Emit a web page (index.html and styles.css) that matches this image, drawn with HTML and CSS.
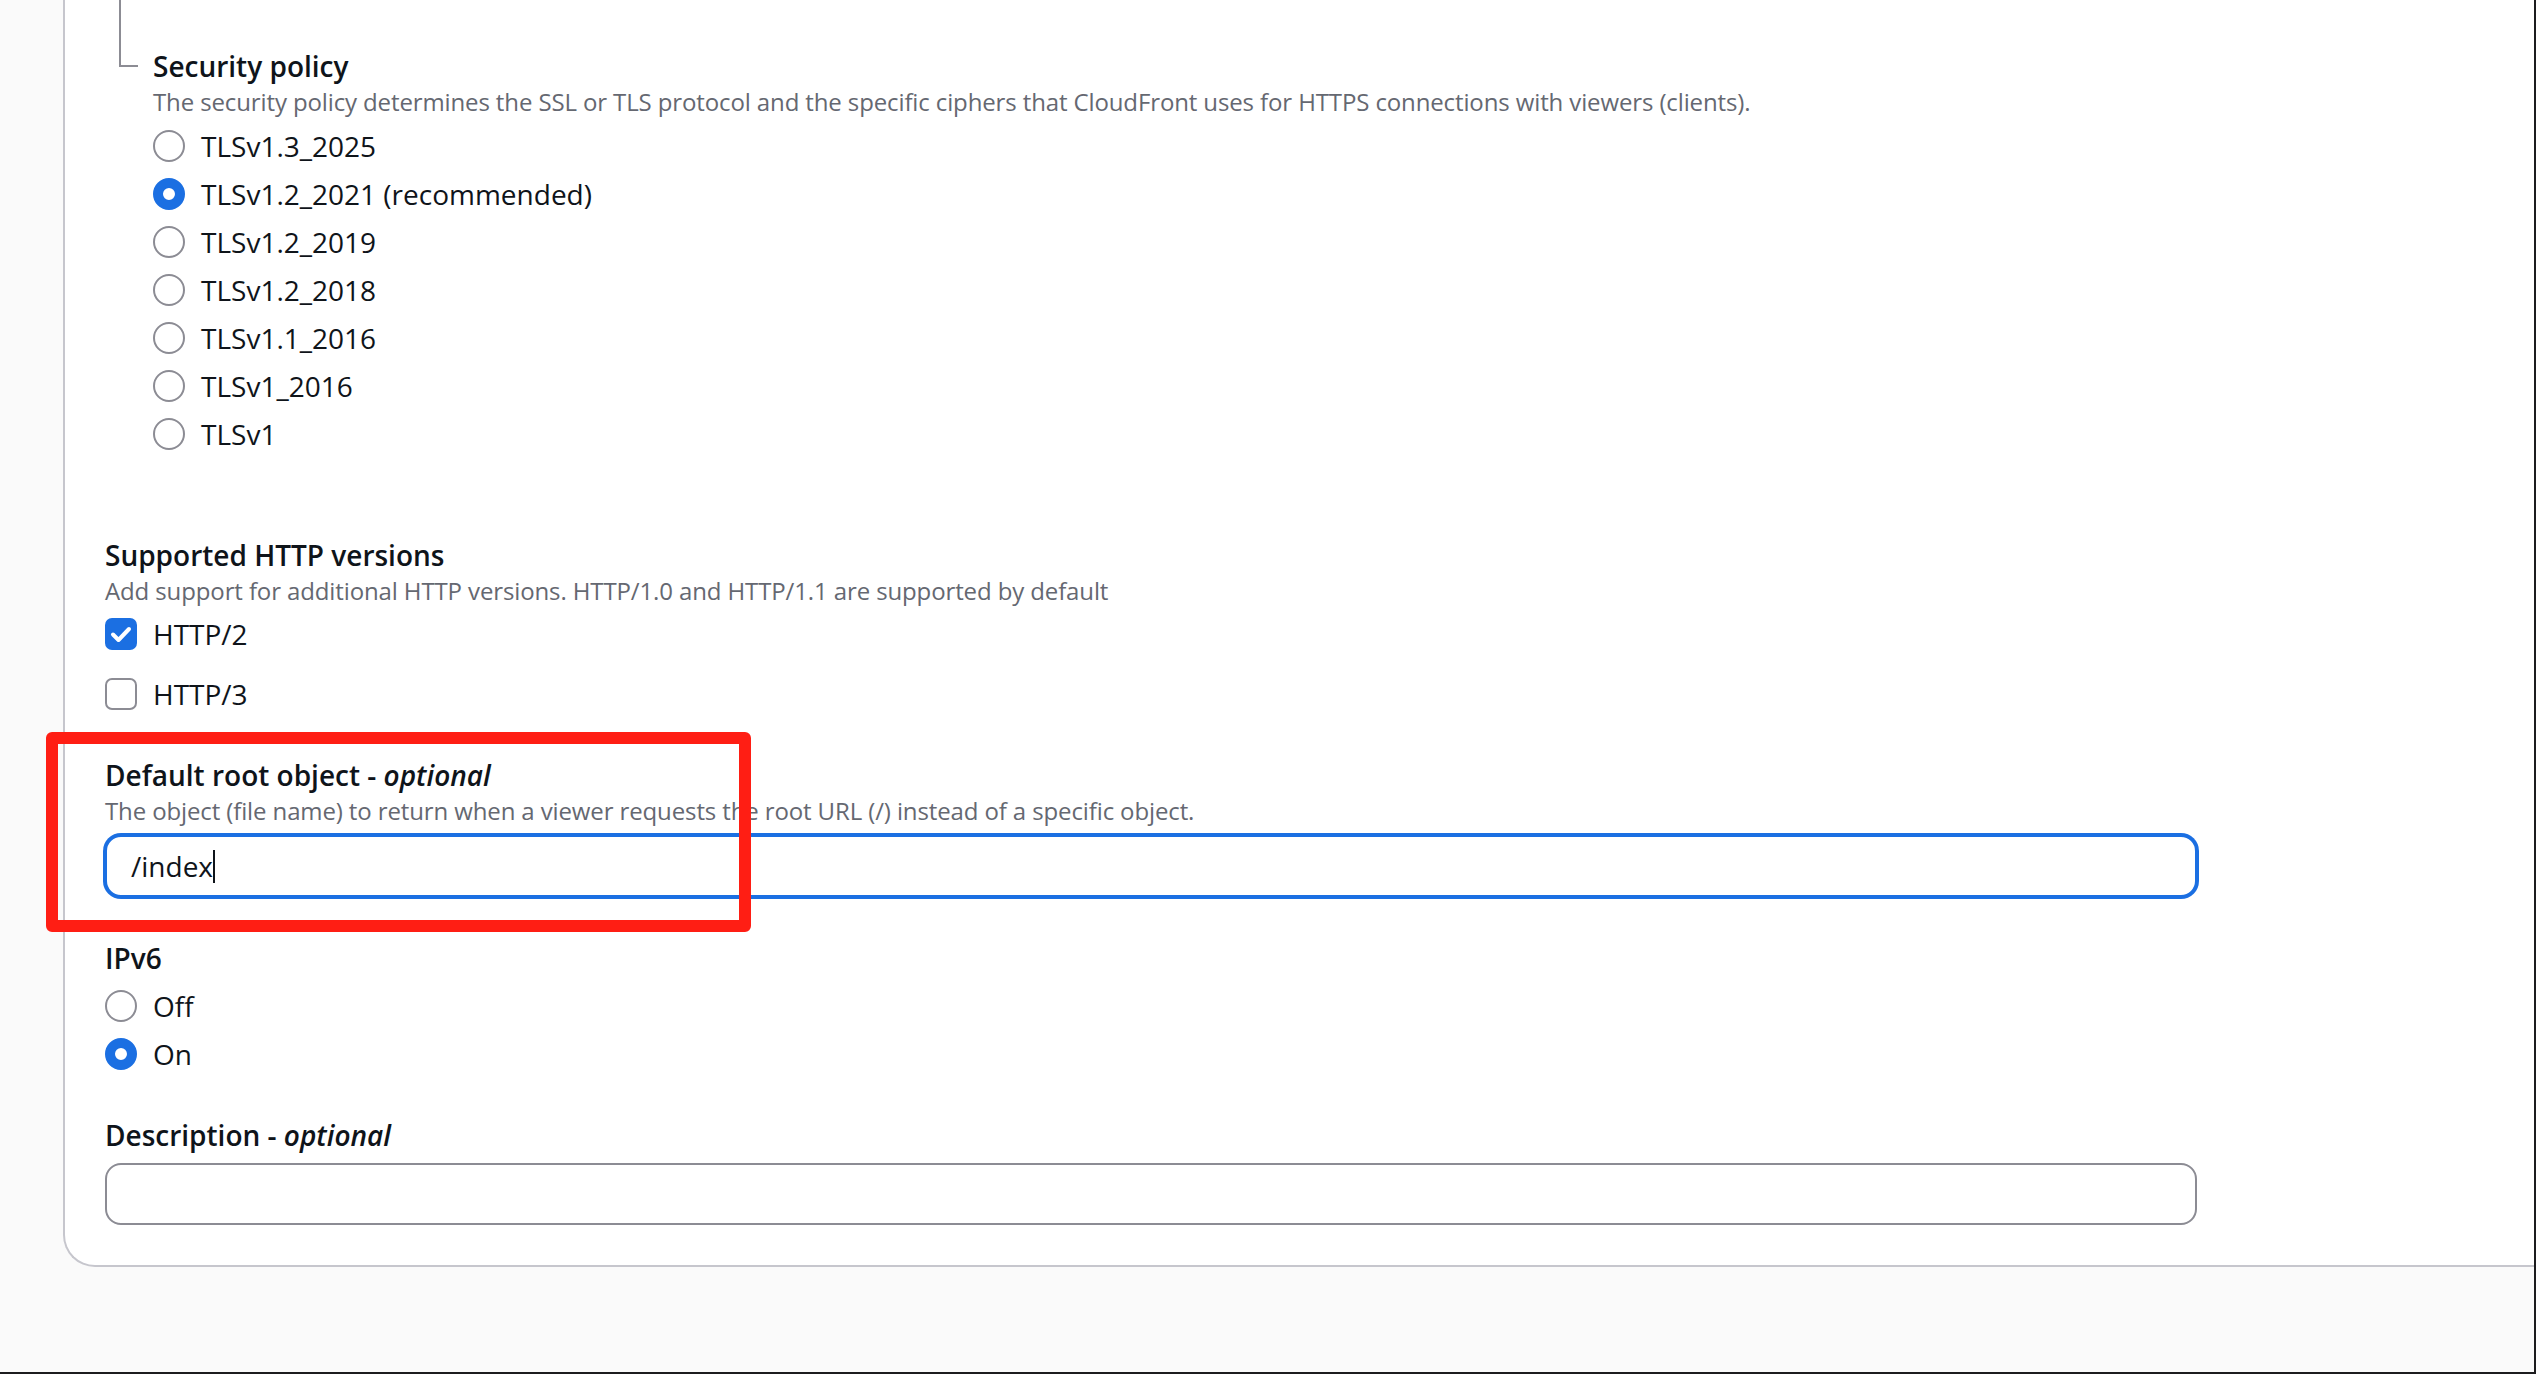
FILE: index.html
```html
<!DOCTYPE html>
<html>
<head>
    <title>Distribution settings</title>
    <link rel="stylesheet" href="styles.css">
</head>
<body>
<div class="page">
    <div class="card">
        <div class="nested">
            <div class="connector"></div>
            <div class="nested-body">
                <div class="label">Security policy</div>
                <div class="desc">The security policy determines the SSL or TLS protocol and the specific ciphers that CloudFront uses for HTTPS connections with viewers (clients).</div>
                <div class="options">
                    <div class="radio"><span class="circle"></span>TLSv1.3_2025</div>
                    <div class="radio"><span class="circle checked"></span>TLSv1.2_2021 (recommended)</div>
                    <div class="radio"><span class="circle"></span>TLSv1.2_2019</div>
                    <div class="radio"><span class="circle"></span>TLSv1.2_2018</div>
                    <div class="radio"><span class="circle"></span>TLSv1.1_2016</div>
                    <div class="radio"><span class="circle"></span>TLSv1_2016</div>
                    <div class="radio"><span class="circle"></span>TLSv1</div>
                </div>
            </div>
        </div>

        <div class="field">
            <div class="label">Supported HTTP versions</div>
            <div class="desc">Add support for additional HTTP versions. HTTP/1.0 and HTTP/1.1 are supported by default</div>
            <div class="checks">
                <div class="check">
                    <span class="box checked">
                        <svg width="32" height="32" viewBox="0 0 32 32"><path d="M8 16.5l5.5 5.5 10.5-11" fill="none" stroke="#fff" stroke-width="4" stroke-linecap="round" stroke-linejoin="round"/></svg>
                    </span>HTTP/2
                </div>
                <div class="check"><span class="box"></span>HTTP/3</div>
            </div>
        </div>

        <div class="field">
            <div class="label">Default root object - <i>optional</i></div>
            <div class="desc">The object (file name) to return when a viewer requests the root URL (/) instead of a specific object.</div>
            <div class="input focused">/index<span class="caret"></span></div>
        </div>

        <div class="field">
            <div class="label">IPv6</div>
            <div class="options">
                <div class="radio"><span class="circle"></span>Off</div>
                <div class="radio"><span class="circle checked"></span>On</div>
            </div>
        </div>

        <div class="field">
            <div class="label">Description - <i>optional</i></div>
            <div class="input"></div>
        </div>
    </div>

    <!-- screenshot annotation -->
    <div class="highlight"></div>
</div>
</body>
</html>
```

FILE: styles.css
```css
body {
    margin: 0;
    padding: 0;
    font-family: "Open Sans", "Noto Sans", sans-serif;
    color: #0f141a;
}

.page {
    position: relative;
    width: 2536px;
    height: 1374px;
    box-sizing: border-box;
    padding-left: 63px;
    background-color: #fafafa;
    border-right: 2px solid #1c1c1e;
    border-bottom: 2px solid #1c1c1e;
    overflow: hidden;
}

/* Container card, top and right edges are cut off */
.card {
    background-color: #fff;
    border-left: 2px solid #c6c6cd;
    border-bottom: 2px solid #c6c6cd;
    border-bottom-left-radius: 32px;
    padding: 0 0 40px 40px;
}

.label {
    font-size: 28px;
    line-height: 40px;
    font-weight: 600;
}

.label i {
    font-weight: 600;
}

.desc {
    font-size: 24px;
    line-height: 32px;
    color: #656871;
    letter-spacing: -0.12px;
}

/* Nested security policy block */
.nested {
    display: flex;
    margin-left: 14px;
    margin-bottom: 81px;
}

.connector {
    width: 19px;
    height: 67px;
    box-sizing: border-box;
    border-left: 2px solid #8c8c94;
    border-bottom: 2px solid #8c8c94;
    flex-shrink: 0;
}

.nested-body {
    margin-left: 15px;
    padding-top: 46px;
}

.field + .field {
    margin-top: 41px;
}

/* Radios */
.options {
    display: flex;
    flex-direction: column;
    gap: 8px;
    margin-top: 8px;
}

.radio {
    display: flex;
    align-items: center;
    height: 40px;
    font-size: 28px;
}

.circle {
    width: 32px;
    height: 32px;
    box-sizing: border-box;
    border: 2px solid #8c8c94;
    border-radius: 50%;
    margin-right: 16px;
    background-color: #fff;
    flex-shrink: 0;
}

.circle.checked {
    border: 10px solid #1b6fe2;
}

/* Checkboxes */
.checks {
    display: flex;
    flex-direction: column;
    gap: 20px;
    margin-top: 7px;
}

.check {
    display: flex;
    align-items: center;
    height: 40px;
    font-size: 28px;
}

.box {
    width: 32px;
    height: 32px;
    box-sizing: border-box;
    border: 2px solid #8c8c94;
    border-radius: 7px;
    margin-right: 16px;
    flex-shrink: 0;
}

.box.checked {
    border: none;
    background-color: #1b6fe2;
}

.box svg {
    display: block;
}

/* Text inputs */
.input {
    width: 2092px;
    height: 62px;
    box-sizing: border-box;
    margin-top: 8px;
    padding: 0 24px;
    border: 2px solid #8c8c94;
    border-radius: 16px;
    background-color: #fff;
    font-size: 28px;
    line-height: 58px;
    display: flex;
    align-items: center;
}

.input.focused {
    border-color: #1b6fe2;
    box-shadow: 0 0 0 2px #1b6fe2;
}

.caret {
    display: inline-block;
    width: 2px;
    height: 33px;
    background-color: #0f141a;
}

/* Red annotation box drawn over the screenshot */
.highlight {
    position: absolute;
    left: 46px;
    top: 732px;
    width: 705px;
    height: 200px;
    box-sizing: border-box;
    border: 12px solid #ff1e14;
    border-radius: 6px;
}
```
